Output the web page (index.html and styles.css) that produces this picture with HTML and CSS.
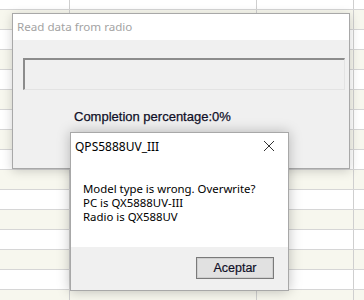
FILE: index.html
```html
<!DOCTYPE html>
<html lang="en">
<head>
  <meta charset="UTF-8">
  <title>Read data from radio</title>
  <link rel="stylesheet" href="styles.css">
</head>
<body>

  <div class="sheet">
    <div class="row first"><span></span><span></span><span></span><span></span></div>
    <div class="row cream"><span></span><span></span><span></span><span></span></div>
    <div class="row"><span></span><span></span><span></span><span></span></div>
    <div class="row cream"><span></span><span></span><span></span><span></span></div>
    <div class="row"><span></span><span></span><span></span><span></span></div>
    <div class="row cream"><span></span><span></span><span></span><span></span></div>
    <div class="row"><span></span><span></span><span></span><span></span></div>
    <div class="row cream"><span></span><span></span><span></span><span></span></div>
    <div class="row"><span></span><span></span><span></span><span></span></div>
    <div class="row cream"><span></span><span></span><span></span><span></span></div>
    <div class="row"><span></span><span></span><span></span><span></span></div>
    <div class="row cream"><span></span><span></span><span></span><span></span></div>
    <div class="row"><span></span><span></span><span></span><span></span></div>
    <div class="row cream"><span></span><span></span><span></span><span></span></div>
    <div class="row"><span></span><span></span><span></span><span></span></div>
    <div class="row cream"><span></span><span></span><span></span><span></span></div>
  </div>

  <div class="window reader">
    <div class="titlebar">Read data from radio</div>
    <div class="content">
      <div class="progress"></div>
      <p class="percent">Completion percentage:0%</p>
    </div>
  </div>

  <div class="window msgbox">
    <div class="msg-title">
      <span>QPS5888UV_III</span>
      <svg class="close" width="12" height="12" viewBox="0 0 12 12">
        <path d="M1 1 L11 11 M11 1 L1 11" stroke="#333" stroke-width="1" fill="none"/>
      </svg>
    </div>
    <div class="msg-body">
      <p>Model type is wrong. Overwrite?</p>
      <p>PC is QX5888UV-III</p>
      <p>Radio is QX588UV</p>
    </div>
    <div class="msg-footer">
      <button class="ok">Aceptar</button>
    </div>
  </div>

</body>
</html>
```

FILE: styles.css
```css
body {
  margin: 0;
  width: 364px;
  height: 300px;
  overflow: hidden;
  position: relative;
  background: #fff;
  font-family: 'Noto Sans', 'Liberation Sans', sans-serif;
}

/* spreadsheet behind the windows */
.sheet {
  display: flex;
  flex-direction: column;
}

.row {
  display: grid;
  grid-template-columns: 70px 187px 97px 1fr;
  height: 19px;
  border-bottom: 1px solid #d6d6d6;
}

.row.first {
  height: 9px;
}

.row.cream {
  background: #f7f7ee;
}

.row span {
  border-right: 1px solid #cfcfcf;
}

.row span:last-child {
  border-right: none;
}

.window {
  position: absolute;
  box-sizing: border-box;
  border: 1px solid #a8a8a8;
}

/* progress window */
.reader {
  left: 12px;
  top: 13px;
  width: 338px;
  height: 156px;
  background: #f0f0f0;
  box-shadow: 0 2px 10px rgba(0, 0, 0, 0.18);
}

.titlebar {
  height: 26px;
  background: #fff;
  color: #a3a3a3;
  font-size: 11.6px;
  line-height: 26px;
  padding-left: 4px;
}

.content {
  padding: 18px 4px 0 10px;
}

.progress {
  width: 322px;
  height: 32px;
  box-sizing: border-box;
  border-top: 2px solid #8c8c8c;
  border-left: 2px solid #8c8c8c;
  border-right: 1px solid #e3e3e3;
  border-bottom: 1px solid #e3e3e3;
  background: #f0f0f0;
}

.percent {
  margin: 19px 0 0 51px;
  font-family: 'Liberation Sans', sans-serif;
  font-size: 13px;
  color: #101028;
  -webkit-text-stroke: 0.25px #101028;
}

/* message box */
.msgbox {
  left: 70px;
  top: 132px;
  width: 219px;
  height: 159px;
  background: #fff;
  display: flex;
  flex-direction: column;
  box-shadow: 0 0 12px rgba(0, 0, 0, 0.25);
}

.msg-title {
  display: flex;
  justify-content: space-between;
  align-items: center;
  height: 24px;
  padding: 1px 13px 0 4px;
  font-size: 12px;
  color: #000;
}

.close {
  display: block;
}

.msg-body {
  flex: 1;
  padding: 24px 0 0 12px;
  font-size: 11.4px;
  line-height: 14px;
  color: #000;
}

.msg-body p {
  margin: 0;
}

.msg-footer {
  height: 43px;
  background: #f0f0f0;
  display: flex;
  justify-content: flex-end;
  align-items: flex-start;
  padding: 10px 14px 0 0;
  box-sizing: border-box;
}

.ok {
  width: 78px;
  height: 22px;
  border: 1px solid #7a7a7a;
  box-shadow: inset 0 0 0 1px #cfcfcf;
  background: #e1e1e1;
  font-family: 'Liberation Sans', sans-serif;
  font-size: 12.5px;
  color: #101028;
  -webkit-text-stroke: 0.2px #101028;
  padding: 0;
}
```
